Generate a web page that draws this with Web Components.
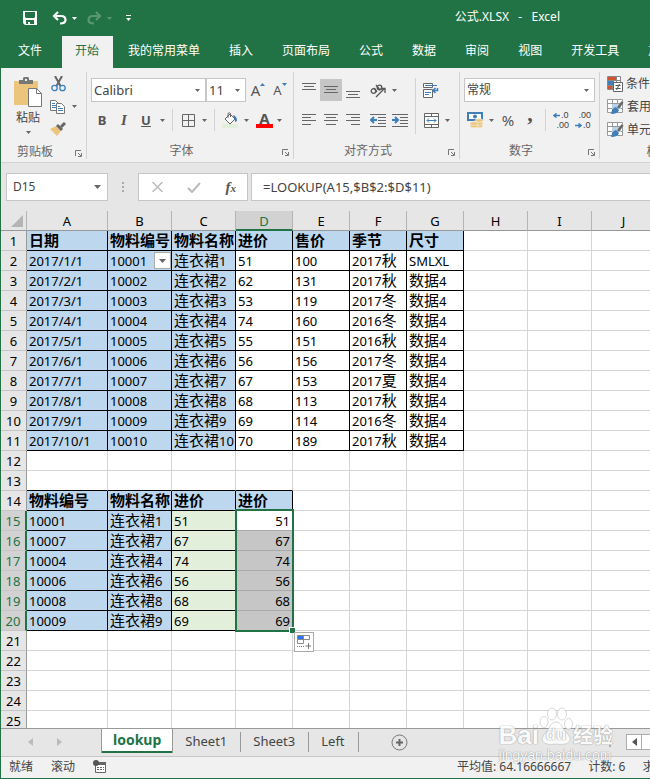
<!DOCTYPE html>
<html lang="zh-CN">
<head>
<meta charset="utf-8">
<title>公式.XLSX - Excel</title>
<style>
    html, body {
        height: 100%;
        margin: 0;
    }

    body {
        font: 12px/16px "Noto Sans", "Noto Sans CJK SC", sans-serif;
        color: #444;
        overflow: hidden;
    }
</style>
</head>
<body>

<excel-window>
    <title-bar slot="title">公式.XLSX&nbsp;&nbsp; -&nbsp;&nbsp; Excel</title-bar>

    <ribbon-tabs slot="tabs">
        <ribbon-tab class="file">文件</ribbon-tab>
        <ribbon-tab active>开始</ribbon-tab>
        <ribbon-tab>我的常用菜单</ribbon-tab>
        <ribbon-tab>插入</ribbon-tab>
        <ribbon-tab>页面布局</ribbon-tab>
        <ribbon-tab>公式</ribbon-tab>
        <ribbon-tab>数据</ribbon-tab>
        <ribbon-tab>审阅</ribbon-tab>
        <ribbon-tab>视图</ribbon-tab>
        <ribbon-tab>开发工具</ribbon-tab>
        <ribbon-tab>加载项</ribbon-tab>
    </ribbon-tabs>

    <ribbon-panel slot="ribbon"></ribbon-panel>
    <formula-bar slot="formula" cell="D15" formula="=LOOKUP(A15,$B$2:$D$11)"></formula-bar>
    <sheet-grid slot="sheet"></sheet-grid>

    <sheet-tabs slot="sheets">
        <sheet-tab active>lookup</sheet-tab>
        <sheet-tab>Sheet1</sheet-tab>
        <sheet-tab>Sheet3</sheet-tab>
        <sheet-tab>Left</sheet-tab>
    </sheet-tabs>

    <status-bar slot="status">
        <span>就绪</span>
        <span>滚动</span>
        <span slot="summary">平均值: 64.16666667</span>
        <span slot="summary">计数: 6</span>
        <span slot="summary">求和: 385</span>
    </status-bar>

    <water-mark slot="mark"></water-mark>
</excel-window>

<script>
    // shared by every element that has buttons inside
    const baseStyle = `
        * { box-sizing: border-box; }
        button, select, input {
            appearance: none;
            margin: 0;
            padding: 0;
            border: 0;
            border-radius: 0;
            background: none;
            color: inherit;
            font: inherit;
            outline: none;
        }
        button {
            display: flex;
            align-items: center;
            justify-content: center;
            white-space: nowrap;
        }
    `

    const lines = (rows) => rows
        .map(([x1, x2, y]) => `<path d="M${x1} ${y}.5H${x2}" stroke="#666"/>`)
        .join('')

    // name: [width, height, markup]
    const icons = {
        save: [14, 14, `<path fill="#fff" fill-rule="evenodd" d="M0 0H14V14H2L0 12ZM2 1V6L3 7H11L12 6V1ZM3 9V13H5V11H7V13H11V9Z"/>`],
        undo: [15, 14, `<path d="M6 1 2 5 6 9M2 5H9C12.500 5 13.500 7 13.500 9C13.500 11 12 12.500 8 12.500" fill="none" stroke="#fff" stroke-width="2.200"/>`],
        redo: [15, 14, `<path d="M9 1 13 5 9 9M13 5H6C2.500 5 1.500 7 1.500 9C1.500 11 3 12.500 7 12.500" fill="none" stroke="#5a9674" stroke-width="2.200"/>`],
        custom: [5, 6, `<path d="M0 .5H5" stroke="#fff"/><path d="M0 3H5L2.500 6Z" fill="#fff"/>`],
        caret: [5, 3, `<path d="M0 0H5L2.500 3Z" fill="currentColor"/>`],
        bigcaret: [7, 4, `<path d="M0 0H7L3.500 4Z" fill="currentColor"/>`],
        paste: [28, 31, `<path d="M0 4H24V28H0Z" fill="#ecc57c"/><path d="M5 7V3H9V1L10 0H14L15 1V3H19V7Z" fill="#777"/><path d="M11 2H13V4H11Z" fill="#f1f1f1"/>
            <path d="M14.500 11.500H22.500L27.500 16.500V29.500H14.500Z" fill="#fff" stroke="#777"/><path d="M22.500 11.500V16.500H27.500" fill="none" stroke="#777"/>`],
        cut: [15, 16, `<path d="M4 0 9.500 10M11 0 5.500 10" stroke="#666" stroke-width="2" fill="none"/><circle cx="3.500" cy="12" r="2.700" fill="none" stroke="#3e7fba" stroke-width="1.300"/><circle cx="11.500" cy="12" r="2.700" fill="none" stroke="#3e7fba" stroke-width="1.300"/>`],
        copy: [16, 14, `<path d="M.5.500H5.500L8.500 3.500V10.500H.5Z" fill="#fff" stroke="#777"/><path d="M2 3.500H5M2 5.500H6M2 7.500H6" stroke="#3e7fba"/>
            <path d="M6.500 3.500H11.500L14.500 6.500V13.500H6.500Z" fill="#fff" stroke="#777"/><path d="M8 6.500H10M8 8.500H13M8 10.500H13" stroke="#3e7fba"/>`],
        brush: [17, 15, `<path d="M0 7 6 4 11 9 7 14 5 12Z" fill="#ecc57c"/><path d="M6 4 8 2 13 7 11 9Z" fill="#666"/><path d="M11 5 15 1" stroke="#666" stroke-width="3"/>`],
        launch: [7, 7, `<path d="M.5 6V.5H6" stroke="#777" fill="none"/><path d="M3 3 6 6M6.500 3V6.500H3" stroke="#777" fill="none"/>`],
        borders: [13, 13, `<path d="M.5.500H12.500V12.500H.5ZM6.500 0V13M0 6.500H13" fill="none" stroke="#666"/>`],
        fill: [17, 16, `<path d="M3 7 8 2 13 7 8 12Z" fill="#fff" stroke="#666"/><path d="M6 6V1.500Q7.500 0 8.500 1.500V5" fill="none" stroke="#666"/><path d="M11 3Q15 4 15 9L13 10Q13 7 12 6Z" fill="#3e7fba"/><path d="M0 12H16V16H0Z" fill="#e2efda"/>`],
        vertical: [14, 8, lines([[0, 14, 0], [2, 12, 3], [0, 14, 6]])],
        left: [14, 12, lines([[0, 14, 0], [0, 9, 3], [0, 14, 6], [0, 9, 10]])],
        center: [14, 12, lines([[0, 14, 0], [2, 12, 3], [0, 14, 6], [2, 12, 10]])],
        right: [14, 12, lines([[0, 14, 0], [5, 14, 3], [0, 14, 6], [5, 14, 10]])],
        outdent: [16, 13, lines([[0, 16, 0], [8, 16, 3], [8, 16, 6], [8, 16, 9], [0, 16, 12]]) + `<path d="M2 6H7M4 3 1 6 4 9" stroke="#3e7fba" stroke-width="2" fill="none"/>`],
        indent: [16, 13, lines([[0, 16, 0], [8, 16, 3], [8, 16, 6], [8, 16, 9], [0, 16, 12]]) + `<path d="M0 6H5M3 3 6 6 3 9" stroke="#3e7fba" stroke-width="2" fill="none"/>`],
        orient: [16, 15, `<g fill="none" stroke="#555" stroke-width="1.300"><circle cx="3.500" cy="8" r="2.300"/><path d="M4 5 7 9M6 2 10 7"/><circle cx="9.500" cy="4.500" r="2.300"/><path d="M6 14 14 6M10.500 5.500H15V10"/></g>`],
        wrap: [16, 15, `<path d="M.5.500H9.500V4.500H.5ZM.5 6.500H9.500V14.500H.5Z" fill="#fff" stroke="#666"/><path d="M2 2.500H14M2 9.500H8M2 11.500H6" stroke="#3e7fba"/><path d="M14.500 5V7.500H10M12.500 5 10 7.500 12.500 10" stroke="#3e7fba" stroke-width="1.500" fill="none"/>`],
        merge: [15, 15, `<path d="M.5.500H14.500V14.500H.5ZM.5 3.500H14.500M.5 11.500H14.500M7.500 0V3M7.500 12V15" fill="#fff" stroke="#666"/><path d="M3 7.500H12M5 5.500 3 7.500 5 9.500M10 5.500 12 7.500 10 9.500" stroke="#3e7fba" fill="none"/>`],
        money: [17, 16, `<path d="M1 1H15V8H1Z" fill="#fff" stroke="#3e7fba" stroke-width="2"/><circle cx="8" cy="4.500" r="2" fill="#3e7fba"/><g fill="#ecc57c" stroke="#f1f1f1" stroke-width=".6"><ellipse cx="12" cy="14" rx="4" ry="1.800"/><ellipse cx="12" cy="11.500" rx="4" ry="1.800"/><ellipse cx="12" cy="8.500" rx="4" ry="1.800"/><ellipse cx="7" cy="14" rx="4" ry="1.800"/><ellipse cx="7" cy="11.500" rx="4" ry="1.800"/></g>`],
        arrowleft: [7, 5, `<path d="M1 2.500H7M3.500 .5 1 2.500 3.500 4.500" fill="none" stroke="#3e7fba" stroke-width="1.500"/>`],
        arrowright: [7, 5, `<path d="M0 2.500H6M3.500 .5 6 2.500 3.500 4.500" fill="none" stroke="#3e7fba" stroke-width="1.500"/>`],
        up: [5, 3, `<path d="M0 3H5L2.500 0Z" fill="#3e7fba"/>`],
        down: [5, 3, `<path d="M0 0H5L2.500 3Z" fill="#3e7fba"/>`],
        cond: [16, 16, `<path d="M.5.500H13.500V13.500H.5ZM.5 4.500H13.500M.5 9.500H13.500M5.500 0V14M9.500 0V14" fill="#fff" stroke="#888"/><path d="M1 1H9V4H1Z" fill="#d35230"/><path d="M1 5H7V9H1Z" fill="#3e7fba"/><path d="M1 10H5V13H1Z" fill="#d35230"/>
            <path d="M6.500 6.500H15.500V15.500H6.500Z" fill="#fff" stroke="#666"/><path d="M8.500 9.500H13.500M8.500 12.500H13.500M12.500 8 9.500 14" stroke="#555"/>`],
        styles: [17, 16, `<path d="M.5.500H15.500V13.500H.5ZM.5 4.500H15.500M.5 9.500H15.500M5.500 0V13M10.500 0V13" fill="#fff" stroke="#999"/><path d="M5 5H14V10H5Z" fill="#b9cfe6"/><path d="M15.500 3 11 9" stroke="#666" stroke-width="2.500"/><path d="M4 15Q5 9 9 8L12 11Q11 15 4 15Z" fill="#3e7fba"/>`],
        cancel: [11, 10, `<path d="M.5 0 10.500 10M10.500 0 .5 10" stroke="#bbb" stroke-width="1.500"/>`],
        accept: [14, 11, `<path d="M1 6 5 10 13 1" fill="none" stroke="#bbb" stroke-width="2"/>`],
        dots: [2, 11, `<path d="M0 0H2V2H0ZM0 4H2V6H0ZM0 8H2V10H0Z" fill="#aaa"/>`],
        corner: [12, 12, `<path d="M12 0V12H0Z" fill="#b4b4b4"/>`],
        prev: [5, 8, `<path d="M5 0V8L0 4Z" fill="currentColor"/>`],
        next: [5, 8, `<path d="M0 0V8L5 4Z" fill="currentColor"/>`],
        plus: [17, 17, `<circle cx="8.500" cy="8.500" r="7.500" fill="none" stroke="#777"/><path d="M8.500 5V12M5 8.500H12" stroke="#666" stroke-width="2"/>`],
        macro: [13, 13, `<path d="M2.500 2.500H12.500V12.500H2.500Z" fill="#fff" stroke="#666"/><path d="M5 2H13V5H5Z" fill="#666"/><path d="M4 7.500H11M4 9.500H11" stroke="#666" stroke-dasharray="2 1"/><circle cx="3" cy="3" r="3" fill="#555"/>`],
        autofill: [14, 14, `<path d="M.5.500H12.500V4.500H.5ZM.5 4.500H6.500V8.500H.5ZM6.500.500V4.500" fill="#fff" stroke="#888"/><path d="M1 1H6V4H1Z" fill="#2f73f5"/><path d="M0 11.500H8" stroke="#777" stroke-dasharray="1 1"/><path d="M11.500 8V14M8.500 11H14" stroke="#777"/>`],
        paw: [34, 38, `<g fill="#fff" stroke="#bbb" stroke-width=".7"><ellipse cx="5" cy="15" rx="4" ry="5.500"/><ellipse cx="13" cy="7" rx="4.500" ry="6"/><ellipse cx="23" cy="7" rx="4.500" ry="6"/><ellipse cx="29.500" cy="17" rx="4" ry="5.500"/><path d="M17 15C23 15 23 22 28 26C35 34 29 39 17 37C5 39 0 34 6 26C11 22 11 15 17 15Z"/></g>`]
    }

    class XIcon extends HTMLElement {
        constructor() {
            super()
            this.attachShadow({ mode: 'open' })
        }

        connectedCallback() {
            const [w, h, markup] = icons[this.getAttribute('name')]
            this.shadowRoot.innerHTML = `
                <style>
                    :host { display: block; flex: none; }
                    svg { display: block; }
                </style>
                <svg width="${w}" height="${h}" viewBox="0 0 ${w} ${h}" aria-hidden="true">${markup}</svg>
            `
        }
    }

    class ExcelWindow extends HTMLElement {
        constructor() {
            super()
            this.attachShadow({ mode: 'open' })
            this.shadowRoot.innerHTML = `
                <style>
                    :host {
                        display: flex;
                        flex-direction: column;
                        box-sizing: border-box;
                        height: 100%;
                        position: relative;
                        overflow: hidden;
                        border-left: 1px solid #217346;
                        border-bottom: 1px solid #217346;
                        background: #e6e6e6;
                    }
                    ::slotted(*) { flex: none; min-width: 0; }
                    ::slotted(sheet-grid) { flex: 1; min-height: 0; }
                </style>
                <slot name="title"></slot>
                <slot name="tabs"></slot>
                <slot name="ribbon"></slot>
                <slot name="formula"></slot>
                <slot name="sheet"></slot>
                <slot name="sheets"></slot>
                <slot name="status"></slot>
                <slot name="mark"></slot>
            `
        }
    }

    class TitleBar extends HTMLElement {
        constructor() {
            super()
            this.attachShadow({ mode: 'open' })
            this.shadowRoot.innerHTML = `
                <style>
                    ${baseStyle}
                    :host {
                        display: flex;
                        align-items: center;
                        height: 36px;
                        padding: 0 90px 0 22px;
                        background: #217346;
                        color: #fff;
                    }
                    .tools { display: flex; align-items: center; gap: 5px; }
                    .undo { margin-left: 10px; }
                    .dim { color: #5a9674; }
                    .redo { margin-left: 5px; }
                    .custom { margin-left: 9px; }
                    .name { margin-left: auto; padding-bottom: 2px; }
                </style>
                <div class="tools">
                    <button aria-label="保存"><x-icon name="save"></x-icon></button>
                    <button class="undo" aria-label="撤消"><x-icon name="undo"></x-icon></button>
                    <x-icon name="caret"></x-icon>
                    <button class="redo" aria-label="恢复"><x-icon name="redo"></x-icon></button>
                    <x-icon class="dim" name="caret"></x-icon>
                    <button class="custom" aria-label="自定义"><x-icon name="custom"></x-icon></button>
                </div>
                <div class="name"><slot></slot></div>
            `
        }
    }

    class RibbonTabs extends HTMLElement {
        constructor() {
            super()
            this.attachShadow({ mode: 'open' })
            this.shadowRoot.innerHTML = `
                <style>
                    :host {
                        display: flex;
                        gap: 2px;
                        height: 32px;
                        padding-left: 4px;
                        background: #217346;
                        overflow: hidden;
                    }
                    ::slotted(.file) { margin-right: 4px; }
                </style>
                <slot></slot>
            `
        }
    }

    class RibbonTab extends HTMLElement {
        constructor() {
            super()
            this.attachShadow({ mode: 'open' })
            this.shadowRoot.innerHTML = `
                <style>
                    ${baseStyle}
                    :host { display: block; flex: none; color: #fff; }
                    :host([active]) { background: #f1f1f1; color: #217346; }
                    button { height: 100%; padding: 0 14px 2px 13px; }
                </style>
                <button><slot></slot></button>
            `
        }
    }

    class RibbonGroup extends HTMLElement {
        constructor() {
            super()
            this.attachShadow({ mode: 'open' })
        }

        connectedCallback() {
            this.shadowRoot.innerHTML = `
                <style>
                    ${baseStyle}
                    :host {
                        display: flex;
                        flex-direction: column;
                        flex: none;
                        border-right: 1px solid #d2d2d2;
                        box-sizing: border-box;
                    }
                    .body { height: 72px; }
                    footer {
                        display: flex;
                        align-items: center;
                        justify-content: center;
                        padding-top: 3px;
                        height: 19px;
                        color: #666;
                        white-space: nowrap;
                    }
                    footer span { flex: 1; text-align: center; padding-right: 6px; }
                    footer button { padding: 3px 4px 0 0; }
                </style>
                <div class="body"><slot></slot></div>
                <footer><span>${this.getAttribute('label')}</span><button aria-label="更多"><x-icon name="launch"></x-icon></button></footer>
            `
        }
    }

    class ComboBox extends HTMLElement {
        constructor() {
            super()
            this.attachShadow({ mode: 'open' })
        }

        connectedCallback() {
            this.shadowRoot.innerHTML = `
                <style>
                    ${baseStyle}
                    :host {
                        display: grid;
                        align-items: center;
                        box-sizing: border-box;
                        height: 24px;
                        border: 1px solid #c6c6c6;
                        background: #fff;
                        color: #444;
                    }
                    select, x-icon { grid-area: 1 / 1; }
                    select { width: 100%; padding: 0 0 0 2px; font-size: 13px; line-height: 20px; }
                    :host(.cjk) select { font-size: 12px; }
                    x-icon { justify-self: end; margin-right: 5px; color: #666; pointer-events: none; }
                </style>
                <select aria-label="${this.getAttribute('label')}"><option>${this.getAttribute('value')}</option></select>
                <x-icon name="caret"></x-icon>
            `
        }
    }

    class RibbonPanel extends HTMLElement {
        constructor() {
            super()
            this.attachShadow({ mode: 'open' })

            const btn = (icon, label, cls = '') =>
                `<button class="${cls}" aria-label="${label}"><x-icon name="${icon}"></x-icon></button>`
            const caret = `<button class="drop" aria-label="更多"><x-icon name="caret"></x-icon></button>`

            this.shadowRoot.innerHTML = `
                <style>
                    ${baseStyle}
                    :host {
                        display: flex;
                        box-sizing: border-box;
                        height: 95px;
                        padding: 4px 0 3px;
                        background: #f1f1f1;
                        border-bottom: 1px solid #d2d2d2;
                        overflow: hidden;
                    }
                    .clip { width: 86px; }
                    .font { width: 207px; }
                    .align { width: 166px; }
                    .number { width: 140px; }
                    .styles { width: 135px; }
                    .row { display: flex; align-items: center; height: 24px; }
                    .stack { display: flex; flex-direction: column; gap: 6px; padding-top: 6px; }
                    .inset { padding-left: 4px; }
                    .number .stack { padding-right: 4px; }
                    .flex { display: flex; }
                    button { flex: none; width: 22px; height: 22px; }
                    .drop { width: 11px; color: #666; }
                    .sep { flex: none; width: 1px; height: 22px; margin: 0 4px; background: #d2d2d2; }
                    .sep.tall { height: 56px; margin-top: 6px; }
                    .gap { width: 3px; }
                    .on { background: #c6c6c6; }
                    .low x-icon { padding-top: 10px; }
                    .high x-icon { padding-bottom: 7px; }

                    .paste { flex-direction: column; width: 30px; height: 60px; margin: 3px 0 0 12px; gap: 2px; }
                    .paste x-icon:last-child { margin-top: 3px; color: #666; }
                    .small { margin-left: 4px; }
                    .small .row { height: 23px; }

                    .face { width: 115px; }
                    .size { width: 40px; }
                    .letter { font-size: 13px; font-weight: bold; color: #555; }
                    .i { font-family: "Liberation Serif", serif; font-style: italic; font-size: 15px; }
                    .u { text-decoration: underline; }
                    .grow { align-items: flex-start; padding-left: 2px; font-size: 15px; line-height: 22px; color: #555; }
                    .grow x-icon { padding-top: 4px; }
                    .shrink { font-size: 13px; }
                    .color { padding-left: 3px; }
                    .color span { font-size: 15px; line-height: 12px; border-bottom: 4px solid #f00; padding: 0 3px; }
                    .pct { font-size: 15px; color: #555; }
                    .comma { font: bold 22px/10px "Liberation Serif", serif; padding-bottom: 12px; color: #555; }
                    .dec { flex-direction: column; align-items: flex-start; padding-left: 3px; font: 9px/10px "Liberation Sans", sans-serif; color: #444; }
                    .dec span { display: flex; align-items: center; gap: 1px; }
                    .dec .end { align-self: flex-end; padding-right: 3px; }

                    .styles .row { height: 23px; }
                    .styles button { width: auto; gap: 3px; padding-left: 7px; }
                </style>

                <ribbon-group class="clip" label="剪贴板">
                    <div class="flex">
                        <button class="paste"><x-icon name="paste"></x-icon><span>粘贴</span><x-icon name="caret"></x-icon></button>
                        <div class="small">
                            <div class="row">${btn('cut', '剪切')}</div>
                            <div class="row">${btn('copy', '复制')}${caret}</div>
                            <div class="row">${btn('brush', '格式刷')}</div>
                        </div>
                    </div>
                </ribbon-group>

                <ribbon-group class="font" label="字体">
                    <div class="stack inset">
                        <div class="row">
                            <combo-box class="face" label="字体" value="Calibri"></combo-box>
                            <combo-box class="size" label="字号" value="11"></combo-box>
                            <button class="grow" aria-label="增大字号">A<x-icon name="up"></x-icon></button>
                            <button class="grow shrink" aria-label="减小字号">A<x-icon name="down"></x-icon></button>
                        </div>
                        <div class="row">
                            <button class="letter">B</button>
                            <button class="letter i">I</button>
                            <button class="letter u">U</button>
                            ${caret}<i class="sep"></i>
                            ${btn('borders', '边框')}${caret}<i class="sep"></i>
                            ${btn('fill', '填充颜色')}${caret}
                            <button class="letter color"><span>A</span></button>${caret}
                        </div>
                    </div>
                </ribbon-group>

                <ribbon-group class="align" label="对齐方式">
                    <div class="flex">
                        <div class="stack inset">
                            <div class="row">
                                ${btn('vertical', '顶端对齐', 'high')}${btn('vertical', '垂直居中', 'on')}${btn('vertical', '底端对齐', 'low')}
                                <i class="gap"></i>${btn('orient', '方向')}${caret}
                            </div>
                            <div class="row">
                                ${btn('left', '左对齐')}${btn('center', '居中')}${btn('right', '右对齐')}
                                <i class="gap"></i>${btn('outdent', '减少缩进量')}${btn('indent', '增加缩进量')}
                            </div>
                        </div>
                        <i class="sep tall"></i>
                        <div class="stack">
                            <div class="row">${btn('wrap', '自动换行')}</div>
                            <div class="row">${btn('merge', '合并后居中')}${caret}</div>
                        </div>
                    </div>
                </ribbon-group>

                <ribbon-group class="number" label="数字">
                    <div class="stack inset">
                        <combo-box class="cjk" label="数字格式" value="常规"></combo-box>
                        <div class="row">
                            ${btn('money', '会计数字格式')}${caret}
                            <button class="pct">%</button>
                            <button class="comma">,</button>
                            <i class="sep"></i>
                            <button class="dec"><span><x-icon name="arrowleft"></x-icon>.0</span><span class="end">.00</span></button>
                            <button class="dec"><span class="end">.00</span><span><x-icon name="arrowright"></x-icon>.0</span></button>
                        </div>
                    </div>
                </ribbon-group>

                <ribbon-group class="styles" label="样式">
                    <div class="row"><button><x-icon name="cond"></x-icon>条件格式</button></div>
                    <div class="row"><button><x-icon name="styles"></x-icon>套用表格格式</button></div>
                    <div class="row"><button><x-icon name="styles"></x-icon>单元格样式</button></div>
                </ribbon-group>
            `
        }
    }

    class FormulaBar extends HTMLElement {
        constructor() {
            super()
            this.attachShadow({ mode: 'open' })
        }

        connectedCallback() {
            this.shadowRoot.innerHTML = `
                <style>
                    ${baseStyle}
                    :host { display: flex; padding: 10px 0; overflow: hidden; }
                    .box {
                        display: flex;
                        align-items: center;
                        height: 28px;
                        border: 1px solid #c6c6c6;
                        background: #fff;
                    }
                    .name { width: 102px; margin-left: 5px; padding: 0 6px; color: #666; }
                    .name input { flex: 1; min-width: 0; color: #444; }
                    .dots { align-self: center; margin: 0 14px; }
                    .tools { width: 110px; justify-content: space-between; padding: 0 11px 0 13px; }
                    .fx { font: italic bold 15px "Liberation Serif", serif; color: #555; }
                    .fx small { font-size: 11px; padding-top: 2px; }
                    .formula { flex: 1; margin-left: 3px; border-right: 0; padding-left: 11px; }
                    .formula input { width: 100%; font-size: 13px; }
                </style>
                <div class="box name">
                    <input aria-label="名称框" value="${this.getAttribute('cell')}">
                    <button aria-label="名称列表"><x-icon name="bigcaret"></x-icon></button>
                </div>
                <x-icon class="dots" name="dots"></x-icon>
                <div class="box tools">
                    <button aria-label="取消"><x-icon name="cancel"></x-icon></button>
                    <button aria-label="输入"><x-icon name="accept"></x-icon></button>
                    <button class="fx">f<small>x</small></button>
                </div>
                <div class="box formula">
                    <input aria-label="编辑栏" value="${this.getAttribute('formula')}">
                </div>
            `
        }
    }

    const data = {
        1: ['日期', '物料编号', '物料名称', '进价', '售价', '季节', '尺寸'],
        2: ['2017/1/1', '10001', '连衣裙1', '51', '100', '2017秋', 'SMLXL'],
        3: ['2017/2/1', '10002', '连衣裙2', '62', '131', '2017秋', '数据4'],
        4: ['2017/3/1', '10003', '连衣裙3', '53', '119', '2017冬', '数据4'],
        5: ['2017/4/1', '10004', '连衣裙4', '74', '160', '2016冬', '数据4'],
        6: ['2017/5/1', '10005', '连衣裙5', '55', '151', '2016秋', '数据4'],
        7: ['2017/6/1', '10006', '连衣裙6', '56', '156', '2017冬', '数据4'],
        8: ['2017/7/1', '10007', '连衣裙7', '67', '153', '2017夏', '数据4'],
        9: ['2017/8/1', '10008', '连衣裙8', '68', '113', '2017秋', '数据4'],
        10: ['2017/9/1', '10009', '连衣裙9', '69', '114', '2016冬', '数据4'],
        11: ['2017/10/1', '10010', '连衣裙10', '70', '189', '2017秋', '数据4'],
        14: ['物料编号', '物料名称', '进价', '进价'],
        15: ['10001', '连衣裙1', '51', '51'],
        16: ['10007', '连衣裙7', '67', '67'],
        17: ['10004', '连衣裙4', '74', '74'],
        18: ['10006', '连衣裙6', '56', '56'],
        19: ['10008', '连衣裙8', '68', '68'],
        20: ['10009', '连衣裙9', '69', '69']
    }

    class SheetGrid extends HTMLElement {
        constructor() {
            super()
            this.attachShadow({ mode: 'open' })
            this.columns = 'ABCDEFGHIJ'.split('')
            this.widths = [26, 81, 64, 64, 57, 57, 57, 57, 64, 64]
            this.rowCount = 25
        }

        cellClass(r, c) {
            const cls = []
            const upper = r >= 1 && r <= 11 && c < 7
            const lower = r >= 14 && r <= 20 && c < 4
            if (upper || lower) cls.push('line')
            if (r === 13 && c < 4) cls.push('under')
            if (r === 1 && c < 7 || r === 14 && c < 4) cls.push('head')
            if (r >= 2 && r <= 11 && c < 3 || r >= 15 && r <= 20 && c < 2) cls.push('blue')
            if (r >= 15 && r <= 20 && c === 2) cls.push('green')
            if (r >= 15 && r <= 20 && c === 3) cls.push('picked')
            if (r === 15 && c === 3) cls.push('current')
            return cls.join(' ')
        }

        cell(r, c) {
            // chinese characters are drawn larger than the digits beside them
            const text = ((data[r] || [])[c] || '').replace(/[\u4e00-\u9fff]+/g, '<span>$&</span>')
            let extra = ''
            if (r === 2 && c === 1) {
                extra = `<button aria-label="筛选"><x-icon name="bigcaret"></x-icon></button>`
            }
            if (r === 15 && c === 3) {
                extra = `<div class="range"><i></i><x-icon name="autofill"></x-icon></div>`
            }
            return `<td class="${this.cellClass(r, c)}">${text}${extra}</td>`
        }

        connectedCallback() {
            const cols = this.widths.map(w => `<col style="width:${w}px">`).join('') + '<col>'
            const head = this.columns.map(c => `<th class="${c === 'D' ? 'sel' : ''}">${c}</th>`).join('')
            let rows = ''
            for (let r = 1; r <= this.rowCount; r++) {
                const cells = this.columns.map((_, c) => this.cell(r, c)).join('')
                rows += `<tr><th class="${r >= 15 && r <= 20 ? 'sel' : ''}">${r}</th>${cells}</tr>`
            }

            this.shadowRoot.innerHTML = `
                <style>
                    ${baseStyle}
                    :host { display: block; overflow: hidden; background: #fff; }
                    table {
                        width: 100%;
                        min-width: 655px;
                        table-layout: fixed;
                        border-collapse: separate;
                        border-spacing: 0;
                        font-size: 13px;
                        line-height: 18px;
                        color: #000;
                    }
                    tr { height: 20px; }
                    th, td { padding: 0; white-space: nowrap; border: 0 solid #d4d4d4; border-width: 0 1px 1px 0; }
                    th { font-weight: normal; background: #e6e6e6; border-color: #c6c6c6; padding-top: 1px; line-height: 17px; }
                    thead th { border-color: #b4b4b4; border-bottom-color: #999; }
                    tbody th { border-right-color: #999; }
                    .sel { background: #d2d2d2; color: #217346; }
                    thead .sel { border-bottom: 2px solid #217346; line-height: 16px; }
                    tbody .sel { border-right: 2px solid #217346; }
                    th x-icon { float: right; margin-right: 3px; }
                    td { padding-left: 2px; padding-top: 1px; line-height: 17px; position: relative; }
                    td span { font-size: 15px; line-height: 1px; }
                    .line { border-color: #000; }
                    .under { border-bottom-color: #000; }
                    .head { background: #bdd7ee; font-weight: bold; }
                    .blue { background: #bdd7ee; }
                    .green { background: #e2efda; }
                    .picked { background: #c6c6c6; text-align: right; padding-right: 2px; border-bottom-color: #aaa; }
                    .current { background: #fff; }
                    td button {
                        position: absolute;
                        top: 1px;
                        right: 0;
                        width: 17px;
                        height: 17px;
                        border: 1px solid #ababab;
                        background: #fff;
                        color: #666;
                    }
                    .range {
                        position: absolute;
                        z-index: 1;
                        top: -2px;
                        left: -1px;
                        right: -2px;
                        height: 123px;
                        border: 2px solid #217346;
                    }
                    .range i {
                        position: absolute;
                        right: -3px;
                        bottom: -3px;
                        width: 6px;
                        height: 6px;
                        background: #217346;
                        border: solid #fff;
                        border-width: 1px 0 0 1px;
                    }
                    .range x-icon {
                        position: absolute;
                        top: 121px;
                        left: 57px;
                        padding: 2px;
                        border: 1px solid #ababab;
                        background: #fff;
                    }
                </style>
                <table>
                    <colgroup>${cols}</colgroup>
                    <thead><tr><th><x-icon name="corner"></x-icon></th>${head}</tr></thead>
                    <tbody>${rows}</tbody>
                </table>
            `
        }
    }

    class SheetTabs extends HTMLElement {
        constructor() {
            super()
            this.attachShadow({ mode: 'open' })
            this.shadowRoot.innerHTML = `
                <style>
                    ${baseStyle}
                    :host {
                        display: flex;
                        align-items: flex-start;
                        box-sizing: border-box;
                        height: 28px;
                        border-top: 1px solid #999;
                        background: #e6e6e6;
                        overflow: hidden;
                    }
                    .nav { display: flex; gap: 24px; width: 100px; padding: 9px 0 0 27px; color: #bbb; }
                    .add { margin: 5px 0 0 32px; }
                    .scroll { display: flex; align-items: center; margin-left: auto; padding-top: 5px; }
                    .scroll button { width: 16px; height: 16px; margin-left: 15px; border: 1px solid #ababab; background: #fff; color: #555; }
                    .thumb { width: 8px; height: 16px; border: 1px solid #ababab; border-width: 1px 0; background: #fff; }
                </style>
                <div class="nav">
                    <button aria-label="上一个"><x-icon name="prev"></x-icon></button>
                    <button aria-label="下一个"><x-icon name="next"></x-icon></button>
                </div>
                <slot></slot>
                <button class="add" aria-label="新工作表"><x-icon name="plus"></x-icon></button>
                <div class="scroll">
                    <x-icon name="dots"></x-icon>
                    <button aria-label="向左滚动"><x-icon name="prev"></x-icon></button>
                    <div class="thumb"></div>
                </div>
            `
        }
    }

    class SheetTab extends HTMLElement {
        constructor() {
            super()
            this.attachShadow({ mode: 'open' })
            this.shadowRoot.innerHTML = `
                <style>
                    ${baseStyle}
                    :host { display: block; flex: none; font-size: 13px; }
                    button { height: 24px; padding: 0 14px 0 12px; position: relative; }
                    button::after { content: ""; position: absolute; right: 0; top: 3px; width: 1px; height: 20px; background: #999; }
                    :host([active]) {
                        margin-top: -1px;
                        font-size: 14px;
                        font-weight: bold;
                        color: #217346;
                        background: #fff;
                        border: solid #999;
                        border-width: 0 1px 0 1px;
                    }
                    :host([active]) button { height: 25px; padding: 1px 11px 0; border-bottom: 2px solid #217346; }
                    :host([active]) button::after { content: none; }
                </style>
                <button><slot></slot></button>
            `
        }
    }

    class StatusBar extends HTMLElement {
        constructor() {
            super()
            this.attachShadow({ mode: 'open' })
            this.shadowRoot.innerHTML = `
                <style>
                    ${baseStyle}
                    :host {
                        display: flex;
                        align-items: center;
                        gap: 18px;
                        box-sizing: border-box;
                        height: 22px;
                        padding: 0 0 2px 8px;
                        border-top: 1px solid #c6c6c6;
                        background: #f1f1f1;
                        white-space: nowrap;
                        overflow: hidden;
                    }
                    .summary { display: flex; gap: 17px; width: 193px; margin-left: auto; }
                    ::slotted(*) { flex: none; }
                </style>
                <slot></slot>
                <button aria-label="录制宏"><x-icon name="macro"></x-icon></button>
                <div class="summary"><slot name="summary"></slot></div>
            `
        }
    }

    class WaterMark extends HTMLElement {
        constructor() {
            super()
            this.attachShadow({ mode: 'open' })
            this.shadowRoot.innerHTML = `
                <style>
                    :host {
                        display: block;
                        position: absolute;
                        right: 37px;
                        bottom: 16px;
                        color: #fff;
                        opacity: .8;
                        text-shadow: 0 0 1px #888, 0 0 1px #888;
                        pointer-events: none;
                    }
                    .logo { display: flex; align-items: flex-end; font: bold 26px/26px "Liberation Sans", sans-serif; }
                    .paw { display: grid; place-items: end center; }
                    .paw x-icon, .paw b { grid-area: 1 / 1; }
                    .paw x-icon { padding-bottom: 3px; }
                    .paw b { font-size: 17px; line-height: 22px; padding-bottom: 2px; }
                    .cn { font: bold 20px/26px "Noto Sans CJK SC", sans-serif; }
                    .url { font: 14px/14px "Liberation Sans", sans-serif; }
                </style>
                <div class="logo"><span>Bai</span><span class="paw"><x-icon name="paw"></x-icon><b>du</b></span><span class="cn">经验</span></div>
                <div class="url">jingyan.baidu.com</div>
            `
        }
    }

    customElements.define('x-icon', XIcon)
    customElements.define('excel-window', ExcelWindow)
    customElements.define('title-bar', TitleBar)
    customElements.define('ribbon-tabs', RibbonTabs)
    customElements.define('ribbon-tab', RibbonTab)
    customElements.define('ribbon-group', RibbonGroup)
    customElements.define('combo-box', ComboBox)
    customElements.define('ribbon-panel', RibbonPanel)
    customElements.define('formula-bar', FormulaBar)
    customElements.define('sheet-grid', SheetGrid)
    customElements.define('sheet-tabs', SheetTabs)
    customElements.define('sheet-tab', SheetTab)
    customElements.define('status-bar', StatusBar)
    customElements.define('water-mark', WaterMark)
</script>
</body>
</html>
